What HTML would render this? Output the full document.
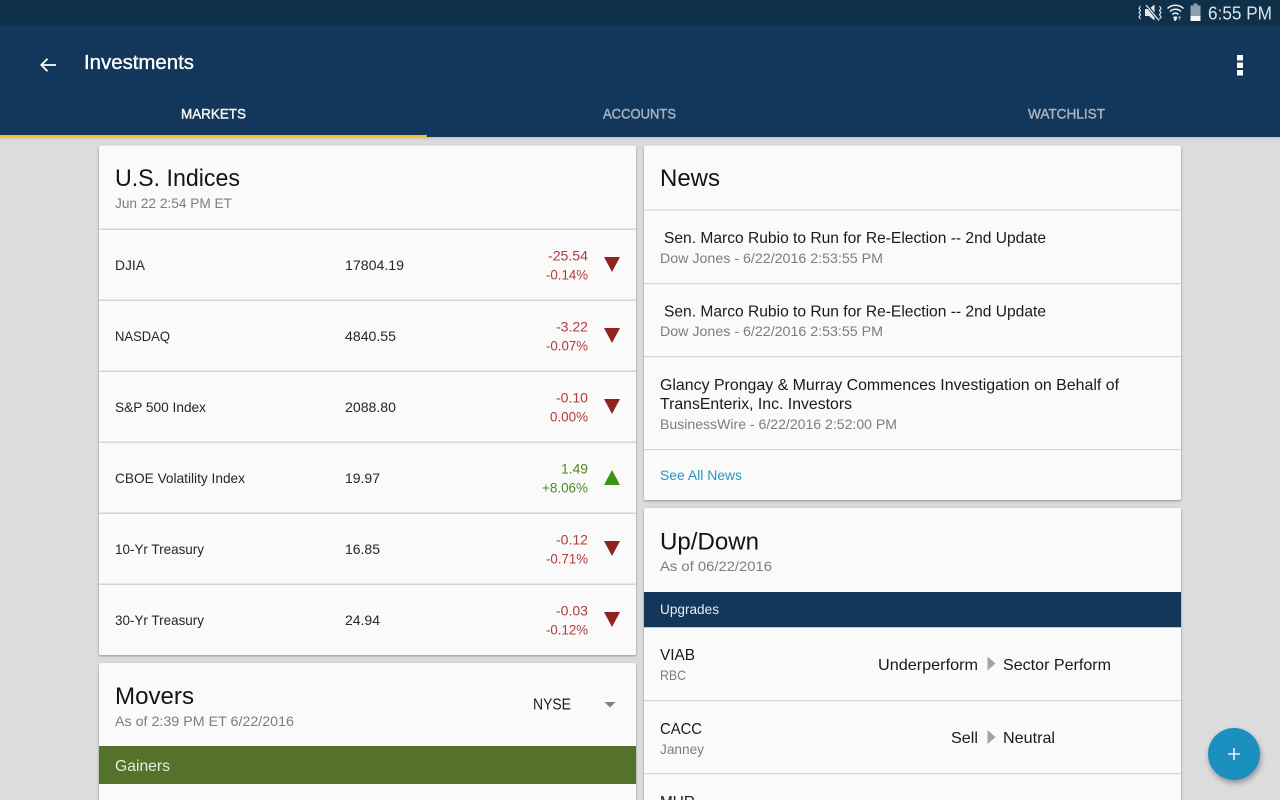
<!DOCTYPE html>
<html lang="en"><head><meta charset="utf-8"><title>Investments</title>
<style>
html,body{margin:0;padding:0;width:1280px;height:800px;overflow:hidden;background:#dcdcdc}
svg{display:block}
text{font-family:"Liberation Sans",sans-serif;font-size:14px;fill:#262626}
.h{font-size:24px;fill:#141414}
.s{font-size:14px;fill:#7d7d7d}
.n{font-size:16px;fill:#1a1a1a}
.r{fill:#b5393b}
.g{fill:#4f8a22}
</style></head><body>
<svg width="1280" height="800" viewBox="0 0 1280 800" xmlns="http://www.w3.org/2000/svg">
<defs>
<filter id="sh" x="-5%" y="-5%" width="110%" height="110%"><feDropShadow dx="0" dy="1" stdDeviation="1.2" flood-color="#000" flood-opacity=".35"/></filter>
<filter id="fs" x="-40%" y="-40%" width="180%" height="180%"><feDropShadow dx="1" dy="3" stdDeviation="3" flood-color="#000" flood-opacity=".35"/></filter>
<linearGradient id="top" x1="0" y1="0" x2="0" y2="1"><stop offset="0" stop-color="#c4c4c4"/><stop offset="1" stop-color="#dcdcdc"/></linearGradient>
</defs>
<rect width="1280" height="800" fill="#dcdcdc"/>
<rect y="137" width="1280" height="4" fill="url(#top)"/>
<!-- cards -->
<rect x="99" y="145.500" width="537" height="509.500" rx="2" fill="#fafafa" filter="url(#sh)"/>
<rect x="99" y="663" width="537" height="160" rx="2" fill="#fafafa" filter="url(#sh)"/>
<rect x="644" y="145.500" width="537" height="354.500" rx="2" fill="#fafafa" filter="url(#sh)"/>
<rect x="644" y="508" width="537" height="320" rx="2" fill="#fafafa" filter="url(#sh)"/>
<!-- header -->
<rect width="1280" height="137" fill="#13375b"/>
<rect width="1280" height="25" fill="#0f3049"/>
<rect y="135" width="427" height="2.200" fill="#f2c21e"/>
<!-- status bar -->
<path d="M1145 9h4l5.500-4.500v16L1149 16h-4z" fill="#e6eaee"/>
<path d="M1146 4.500l13 16" fill="none" stroke="#0f3049" stroke-width="3"/>
<path d="M1146 5l13 15.500" fill="none" stroke="#e6eaee" stroke-width="1.300"/>
<path d="M1140.500 6l-1.500 2.500 1.500 2-1.500 2 1.500 2-1.500 2.500 1.500 2M1159.500 6l1.500 2.500-1.500 2 1.500 2-1.500 2 1.500 2.500-1.500 2" fill="none" stroke="#e6eaee" stroke-width="1.100"/>
<path d="M1167.500 8.500a11.500 11.500 0 0 1 16 0M1170 11.500a8 8 0 0 1 11 0M1172.500 14.500a4 4 0 0 1 6 0" fill="none" stroke="#eef1f4" stroke-width="1.500"/>
<path d="M1173.500 16.500h3.500v2l-1.200 2.500h-1.200l-1.100-2.500z" fill="#eef1f4"/>
<path d="M1179.500 20v-3.500M1178 18l1.500-1.500 1.500 1.500" fill="none" stroke="#8fa0ae" stroke-width="1"/>
<rect x="1190.500" y="5.500" width="10" height="15.500" fill="#8d9eae"/>
<rect x="1193.500" y="3.500" width="4" height="2" fill="#8d9eae"/>
<rect x="1190.500" y="16" width="10" height="5" fill="#f4f6f8"/>
<text x="1208" y="19.500" textLength="64" lengthAdjust="spacingAndGlyphs" style="font-size:18px;fill:#dfe4e9">6:55 PM</text>
<!-- app bar -->
<path d="M56 65H42M47.500 58.800L41.300 65l6.200 6.200" fill="none" stroke="#fff" stroke-width="1.800"/>
<text x="84" y="69" textLength="110" lengthAdjust="spacingAndGlyphs" style="font-size:20px;fill:#fff;stroke:#fff;stroke-width:.35">Investments</text>
<rect x="1237" y="55" width="6" height="5.500" fill="#fff"/><rect x="1237" y="62.500" width="6" height="5.500" fill="#fff"/><rect x="1237" y="70" width="6" height="5.500" fill="#fff"/>
<text x="181" y="118.500" textLength="65" lengthAdjust="spacingAndGlyphs" style="fill:#f2f4f6;stroke:#f2f4f6;stroke-width:.45">MARKETS</text>
<text x="603" y="118.500" textLength="73" lengthAdjust="spacingAndGlyphs" style="fill:#a8b5c3;stroke:#a8b5c3;stroke-width:.4">ACCOUNTS</text>
<text x="1028" y="118.500" textLength="77" lengthAdjust="spacingAndGlyphs" style="fill:#a8b5c3;stroke:#a8b5c3;stroke-width:.4">WATCHLIST</text>
<!-- indices -->
<text class="h" x="115" y="186" textLength="125" lengthAdjust="spacingAndGlyphs">U.S. Indices</text>
<text class="s" x="115" y="208" textLength="117" lengthAdjust="spacingAndGlyphs">Jun 22 2:54 PM ET</text>
<g fill="#d4d4d4">
<rect x="99" y="228.500" width="537" height="1.500"/><rect x="99" y="299.500" width="537" height="1.500"/><rect x="99" y="370.500" width="537" height="1.500"/><rect x="99" y="441.500" width="537" height="1.500"/><rect x="99" y="512.500" width="537" height="1.500"/><rect x="99" y="583.500" width="537" height="1.500"/>
<rect x="644" y="209.500" width="537" height="1.200"/><rect x="644" y="283" width="537" height="1.200"/><rect x="644" y="356" width="537" height="1.200"/><rect x="644" y="449" width="537" height="1.200"/>
<rect x="644" y="700" width="537" height="1.200"/><rect x="644" y="773" width="537" height="1.200"/>
</g>
<text x="115" y="270" textLength="30" lengthAdjust="spacingAndGlyphs">DJIA</text>
<text x="345" y="270" textLength="59" lengthAdjust="spacingAndGlyphs">17804.19</text>
<text class="r" x="548" y="260.500" textLength="40" lengthAdjust="spacingAndGlyphs">-25.54</text>
<text class="r" x="546" y="279.500" textLength="42" lengthAdjust="spacingAndGlyphs">-0.14%</text>
<text x="115" y="341" textLength="55" lengthAdjust="spacingAndGlyphs">NASDAQ</text>
<text x="345" y="341" textLength="51" lengthAdjust="spacingAndGlyphs">4840.55</text>
<text class="r" x="556" y="331.500" textLength="32" lengthAdjust="spacingAndGlyphs">-3.22</text>
<text class="r" x="546" y="350.500" textLength="42" lengthAdjust="spacingAndGlyphs">-0.07%</text>
<text x="115" y="412" textLength="91" lengthAdjust="spacingAndGlyphs">S&amp;P 500 Index</text>
<text x="345" y="412" textLength="51" lengthAdjust="spacingAndGlyphs">2088.80</text>
<text class="r" x="556" y="402.500" textLength="32" lengthAdjust="spacingAndGlyphs">-0.10</text>
<text class="r" x="550" y="421.500" textLength="38" lengthAdjust="spacingAndGlyphs">0.00%</text>
<text x="115" y="483" textLength="130" lengthAdjust="spacingAndGlyphs">CBOE Volatility Index</text>
<text x="345" y="483" textLength="35" lengthAdjust="spacingAndGlyphs">19.97</text>
<text class="g" x="561" y="473.500" textLength="27" lengthAdjust="spacingAndGlyphs">1.49</text>
<text class="g" x="542" y="492.500" textLength="46" lengthAdjust="spacingAndGlyphs">+8.06%</text>
<text x="115" y="554" textLength="89" lengthAdjust="spacingAndGlyphs">10-Yr Treasury</text>
<text x="345" y="554" textLength="35" lengthAdjust="spacingAndGlyphs">16.85</text>
<text class="r" x="556" y="544.500" textLength="32" lengthAdjust="spacingAndGlyphs">-0.12</text>
<text class="r" x="546" y="563.500" textLength="42" lengthAdjust="spacingAndGlyphs">-0.71%</text>
<text x="115" y="625" textLength="89" lengthAdjust="spacingAndGlyphs">30-Yr Treasury</text>
<text x="345" y="625" textLength="35" lengthAdjust="spacingAndGlyphs">24.94</text>
<text class="r" x="556" y="615.500" textLength="32" lengthAdjust="spacingAndGlyphs">-0.03</text>
<text class="r" x="546" y="634.500" textLength="42" lengthAdjust="spacingAndGlyphs">-0.12%</text>
<g fill="#8e2320">
<path d="M604 257h16l-8 15z"/><path d="M604 328h16l-8 15z"/><path d="M604 399h16l-8 15z"/><path d="M604 541h16l-8 15z"/><path d="M604 612h16l-8 15z"/>
</g>
<path d="M604 485h16l-8-15z" fill="#3d9314"/>
<!-- movers -->
<text class="h" x="115" y="704" textLength="79" lengthAdjust="spacingAndGlyphs">Movers</text>
<text class="s" x="115" y="726" textLength="179" lengthAdjust="spacingAndGlyphs">As of 2:39 PM ET 6/22/2016</text>
<text class="n" x="533" y="709.500" textLength="38" lengthAdjust="spacingAndGlyphs">NYSE</text>
<path d="M604.500 702h11l-5.500 5.500z" fill="#808080"/>
<rect x="99" y="746" width="537" height="38" fill="#55722b"/>
<text x="115" y="771" textLength="55" lengthAdjust="spacingAndGlyphs" style="font-size:16px;fill:#e6ecdd">Gainers</text>
<!-- news -->
<text class="h" x="660" y="186" textLength="60" lengthAdjust="spacingAndGlyphs">News</text>
<text class="n" x="664" y="243" textLength="382" lengthAdjust="spacingAndGlyphs">Sen. Marco Rubio to Run for Re-Election -- 2nd Update</text>
<text class="s" x="660" y="263" textLength="223" lengthAdjust="spacingAndGlyphs">Dow Jones - 6/22/2016 2:53:55 PM</text>
<text class="n" x="664" y="316.500" textLength="382" lengthAdjust="spacingAndGlyphs">Sen. Marco Rubio to Run for Re-Election -- 2nd Update</text>
<text class="s" x="660" y="336" textLength="223" lengthAdjust="spacingAndGlyphs">Dow Jones - 6/22/2016 2:53:55 PM</text>
<text class="n" x="660" y="390" textLength="459" lengthAdjust="spacingAndGlyphs">Glancy Prongay &amp; Murray Commences Investigation on Behalf of</text>
<text class="n" x="660" y="409" textLength="192" lengthAdjust="spacingAndGlyphs">TransEnterix, Inc. Investors</text>
<text class="s" x="660" y="429" textLength="237" lengthAdjust="spacingAndGlyphs">BusinessWire - 6/22/2016 2:52:00 PM</text>
<text x="660" y="480" textLength="82" lengthAdjust="spacingAndGlyphs" style="fill:#2a93c6">See All News</text>
<!-- up/down -->
<text class="h" x="660" y="549.500" textLength="99" lengthAdjust="spacingAndGlyphs">Up/Down</text>
<text class="s" x="660" y="571" textLength="112" lengthAdjust="spacingAndGlyphs">As of 06/22/2016</text>
<rect x="644" y="592" width="537" height="35" fill="#13375b"/>
<rect x="644" y="627" width="537" height="1" fill="#c8c8c8"/>
<text x="660" y="614" textLength="59" lengthAdjust="spacingAndGlyphs" style="fill:#e8ecf0">Upgrades</text>
<text class="n" x="660" y="660" textLength="35" lengthAdjust="spacingAndGlyphs">VIAB</text>
<text class="s" x="660" y="680" textLength="26" lengthAdjust="spacingAndGlyphs">RBC</text>
<text class="n" x="878" y="670" textLength="100" lengthAdjust="spacingAndGlyphs">Underperform</text>
<path d="M987.500 656.500l8 7-8 7z" fill="#a3a3a3"/>
<text class="n" x="1003" y="670" textLength="108" lengthAdjust="spacingAndGlyphs">Sector Perform</text>
<text class="n" x="660" y="734" textLength="42" lengthAdjust="spacingAndGlyphs">CACC</text>
<text class="s" x="660" y="754" textLength="44" lengthAdjust="spacingAndGlyphs">Janney</text>
<text class="n" x="951" y="743" textLength="27" lengthAdjust="spacingAndGlyphs">Sell</text>
<path d="M987.500 730l8 7-8 7z" fill="#a3a3a3"/>
<text class="n" x="1003" y="743" textLength="52" lengthAdjust="spacingAndGlyphs">Neutral</text>
<text class="n" x="660" y="807" textLength="35" lengthAdjust="spacingAndGlyphs">MUR</text>
<!-- fab -->
<circle cx="1234" cy="754" r="26" fill="#1c8fc1" filter="url(#fs)"/>
<path d="M1234 748v12M1228 754h12" stroke="#e8f4fa" stroke-width="1.600" fill="none"/>
</svg>
</body></html>
